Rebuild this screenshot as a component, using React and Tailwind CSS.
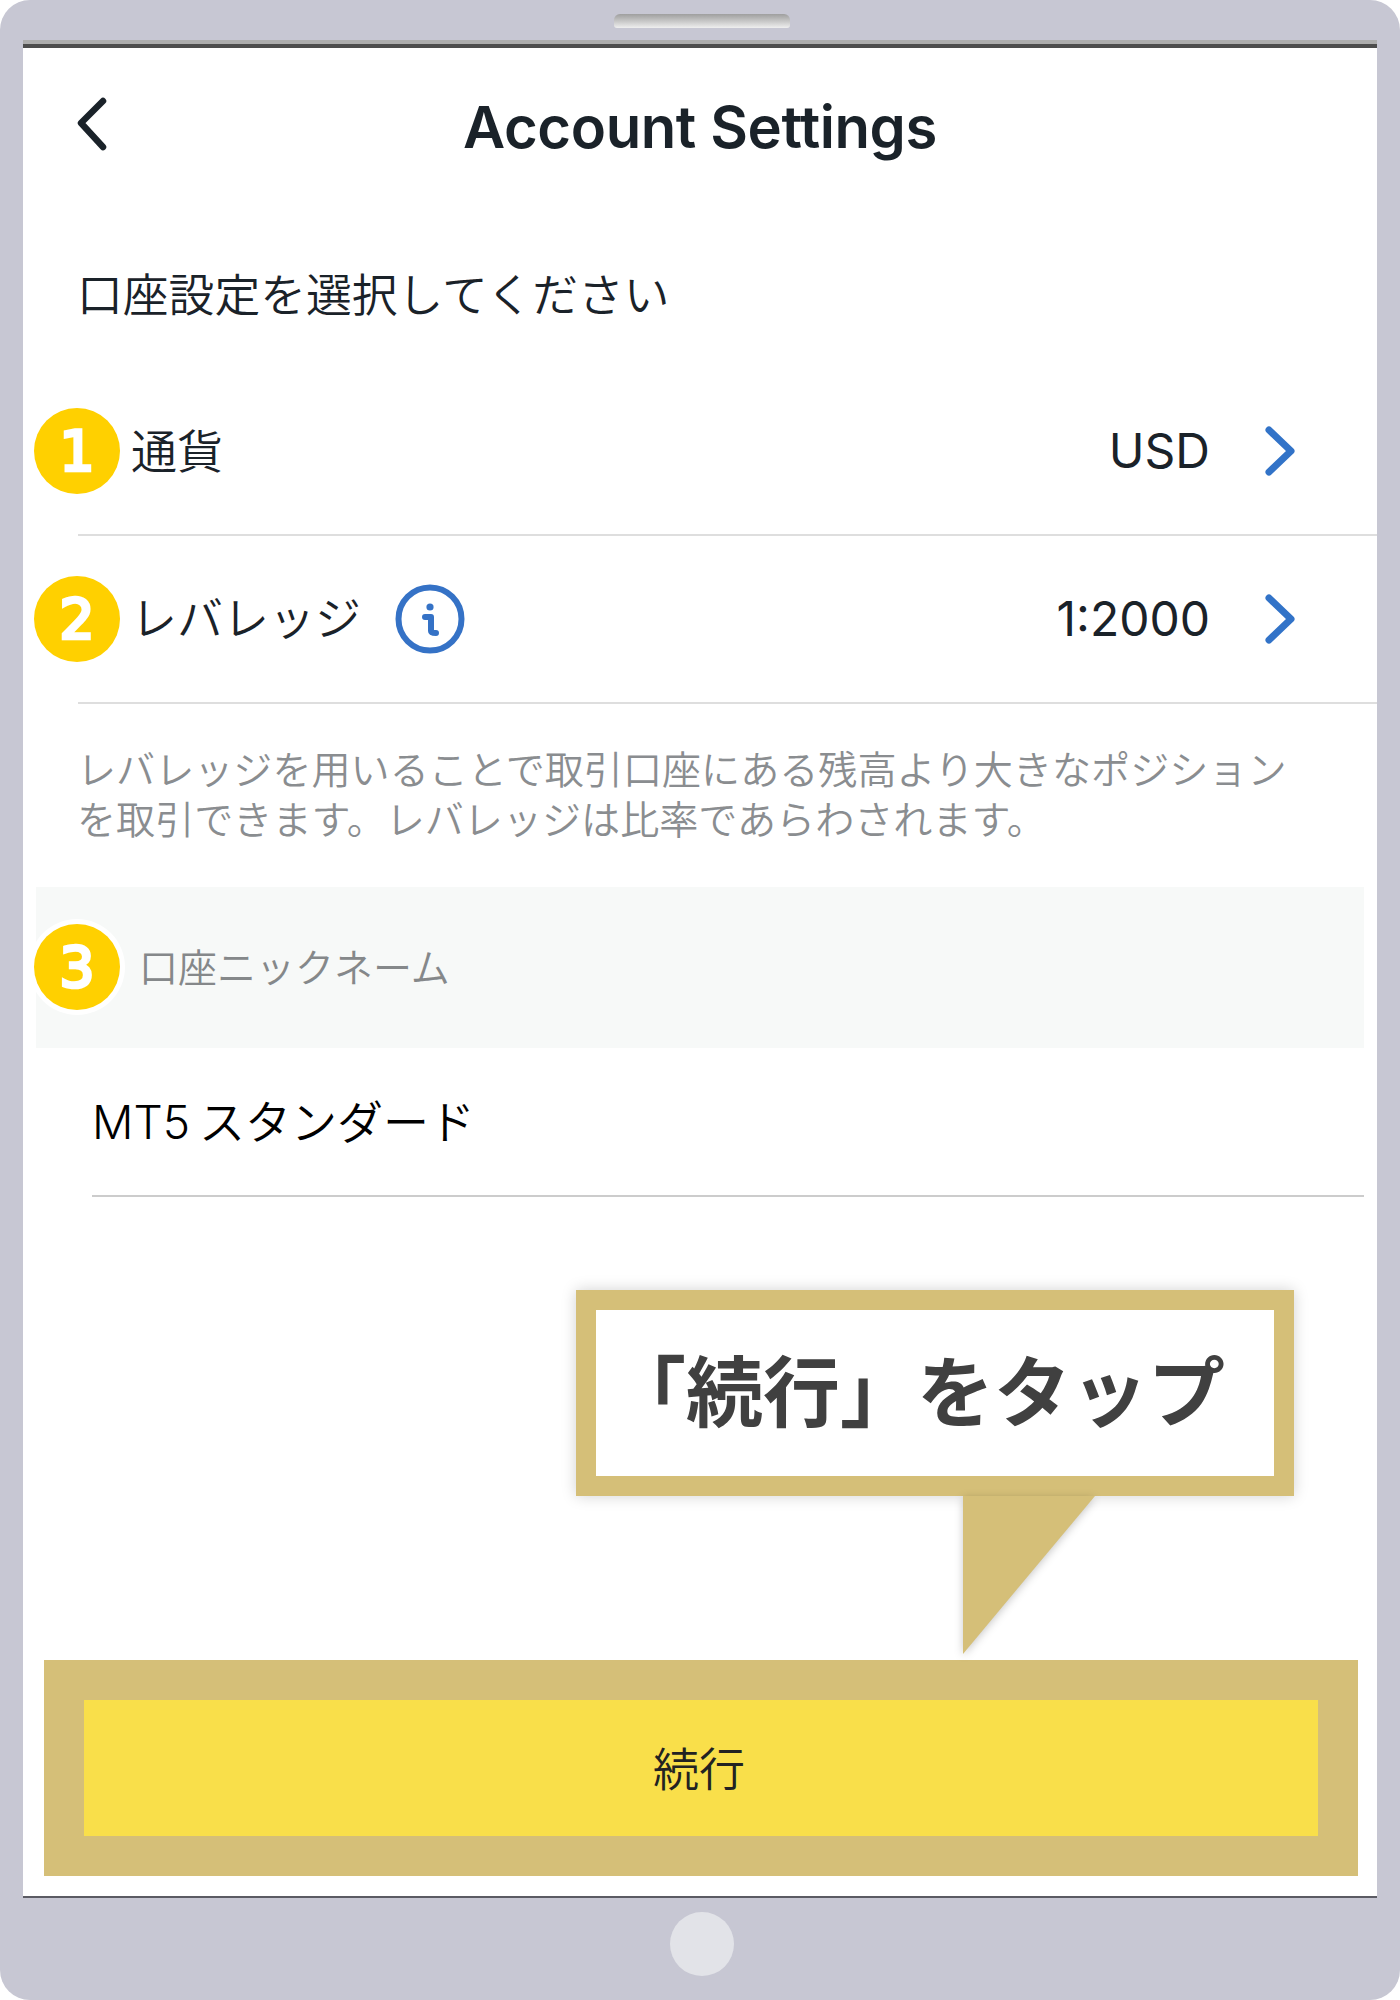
// Account settings step screen inside a tablet frame
const FONT = "font-['Inter','Noto_Sans_CJK_JP',sans-serif]";

function Badge({ n, ring = false }) {
  return (
    <div className={`w-[86px] h-[86px] rounded-full bg-[#ffd000] flex items-center justify-center shrink-0 text-white text-[55px] leading-none [-webkit-text-stroke:3.5px_white] font-['DejaVu_Sans',sans-serif] ${ring ? 'ring-[5px] ring-white' : ''}`}>
      {n}
    </div>
  );
}

function Chevron() {
  return (
    <svg width="30" height="50" viewBox="0 0 30 50" fill="none" className="shrink-0">
      <path d="M4 4 L26 25 L4 46" stroke="#3273c8" strokeWidth="7" strokeLinecap="round" strokeLinejoin="round" />
    </svg>
  );
}

function InfoIcon() {
  return (
    <svg width="70" height="70" viewBox="0 0 70 70" fill="none" className="shrink-0">
      <circle cx="35" cy="35" r="31.5" stroke="#3572c6" strokeWidth="6" />
      <circle cx="35" cy="23" r="3.6" fill="#3572c6" />
      <path d="M30 33 H36 V47 Q36 49 41 49" stroke="#3572c6" strokeWidth="6" strokeLinecap="round" strokeLinejoin="round" />
    </svg>
  );
}

function SettingRow({ n, value, children }) {
  return (
    <div className="ml-[55px] h-[166px] box-content border-b-2 border-[#dedede] flex items-center pr-[82px]">
      <div className="-ml-[44px]"><Badge n={n} /></div>
      {children}
      <span className="ml-auto text-[48px] leading-none text-[#1a2229] mr-[55px]">{value}</span>
      <Chevron />
    </div>
  );
}

export default function App() {
  return (
    <div className="bg-white w-[1400px] h-[2000px]">
      <div className={`${FONT} h-full rounded-[30px] bg-[#c7c7d3] flex flex-col`}>
        {/* Top bezel */}
        <div className="h-[40px] shrink-0 flex justify-center pt-[14px] pl-[4px]">
          <div className="w-[176px] h-[14px] rounded-t-[6px] rounded-b-[3px] bg-gradient-to-b from-[#9f9f9f] to-[#efefef]" />
        </div>

        {/* Screen */}
        <div className="mx-[23px] h-[1858px] shrink-0 bg-white flex flex-col border-t-[4px] border-[#adadad]">
          <div className="h-[4px] bg-[#4d4d4d] shrink-0" />

          {/* Header */}
          <div className="h-[160px] shrink-0 grid grid-cols-[1fr_auto_1fr] items-center">
            <div className="pl-[53px] pb-[8px]">
              <svg width="32" height="54" viewBox="0 0 32 54" fill="none">
                <path d="M27 4 L5 26 L27 50" stroke="#1a2229" strokeWidth="6.5" strokeLinecap="round" strokeLinejoin="round" />
              </svg>
            </div>
            <h1 className="text-[58px] font-semibold leading-none text-[#1a2229] tracking-[-0.4px] pb-[2px]">Account Settings</h1>
            <div />
          </div>

          {/* Prompt */}
          <p className="h-[160px] shrink-0 pl-[54px] pt-[58px] text-[45.8px] leading-[60px] text-[#1a2229] font-[350]">口座設定を選択してください</p>

          <SettingRow n="1" value="USD">
            <span className="ml-[11px] text-[46px] leading-none text-[#1a2229] font-[350]">通貨</span>
          </SettingRow>
          <SettingRow n="2" value="1:2000">
            <span className="ml-[11px] pb-[2px] text-[46px] leading-none text-[#1a2229] font-[350]">レバレッジ</span>
            <span className="ml-[34px]"><InfoIcon /></span>
          </SettingRow>

          {/* Leverage note */}
          <p className="pl-[54px] pr-[80px] pt-[41px] h-[183px] shrink-0 text-[39.1px] leading-[50px] text-[#8a8d90] font-[350]">
            レバレッジを用いることで取引口座にある残高より大きなポジションを取引できます。レバレッジは比率であらわされます。
          </p>

          {/* Nickname */}
          <div className="ml-[13px] mr-[13px] h-[161px] shrink-0 bg-[#f7f9f8] flex items-center">
            <div className="-ml-[2px] mb-[1px]"><Badge n="3" ring /></div>
            <span className="ml-[19px] pb-[1px] text-[39px] leading-none text-[#85888a] font-[350]">口座ニックネーム</span>
          </div>
          <div className="ml-[69px] mr-[13px] h-[149px] shrink-0 border-b-2 border-[#cccccc] flex items-center">
            <span className="text-[46px] leading-none text-black font-[350] [word-spacing:-4px]">MT5 スタンダード</span>
          </div>

          {/* Callout */}
          <div className="relative mt-[93px] ml-[553px] w-[718px] h-[206px] shrink-0 border-[20px] border-[#d5bf78] bg-white flex items-center justify-center pr-[36px] shadow-[0_0_14px_rgba(0,0,0,0.18)]">
            <span className="text-[77px] leading-none font-bold text-[#404040] whitespace-nowrap">「続行」をタップ</span>
            <svg width="132" height="158" viewBox="0 0 132 158" className="absolute top-[186px] left-[367px] drop-shadow-[0_2px_4px_rgba(0,0,0,0.22)]">
              <polygon points="0,0 132,0 0,158" fill="#d5bf78" />
            </svg>
          </div>

          {/* Continue button */}
          <div className="mt-auto mb-[20px] ml-[21px] mr-[19px] h-[216px] shrink-0 border-[40px] border-[#d5bf78] bg-[#f9df4a] flex items-center justify-center pr-[4px]">
            <span className="text-[46px] leading-none text-[#222222] font-[350] pt-[2px]">続行</span>
          </div>
          <div className="h-[2px] bg-[#5b5b63] shrink-0" />
        </div>

        {/* Bottom bezel */}
        <div className="flex-1 flex items-center justify-center pb-[10px] pl-[4px]">
          <div className="w-[64px] h-[64px] rounded-full bg-[#e2e3e8]" />
        </div>
      </div>
    </div>
  );
}
